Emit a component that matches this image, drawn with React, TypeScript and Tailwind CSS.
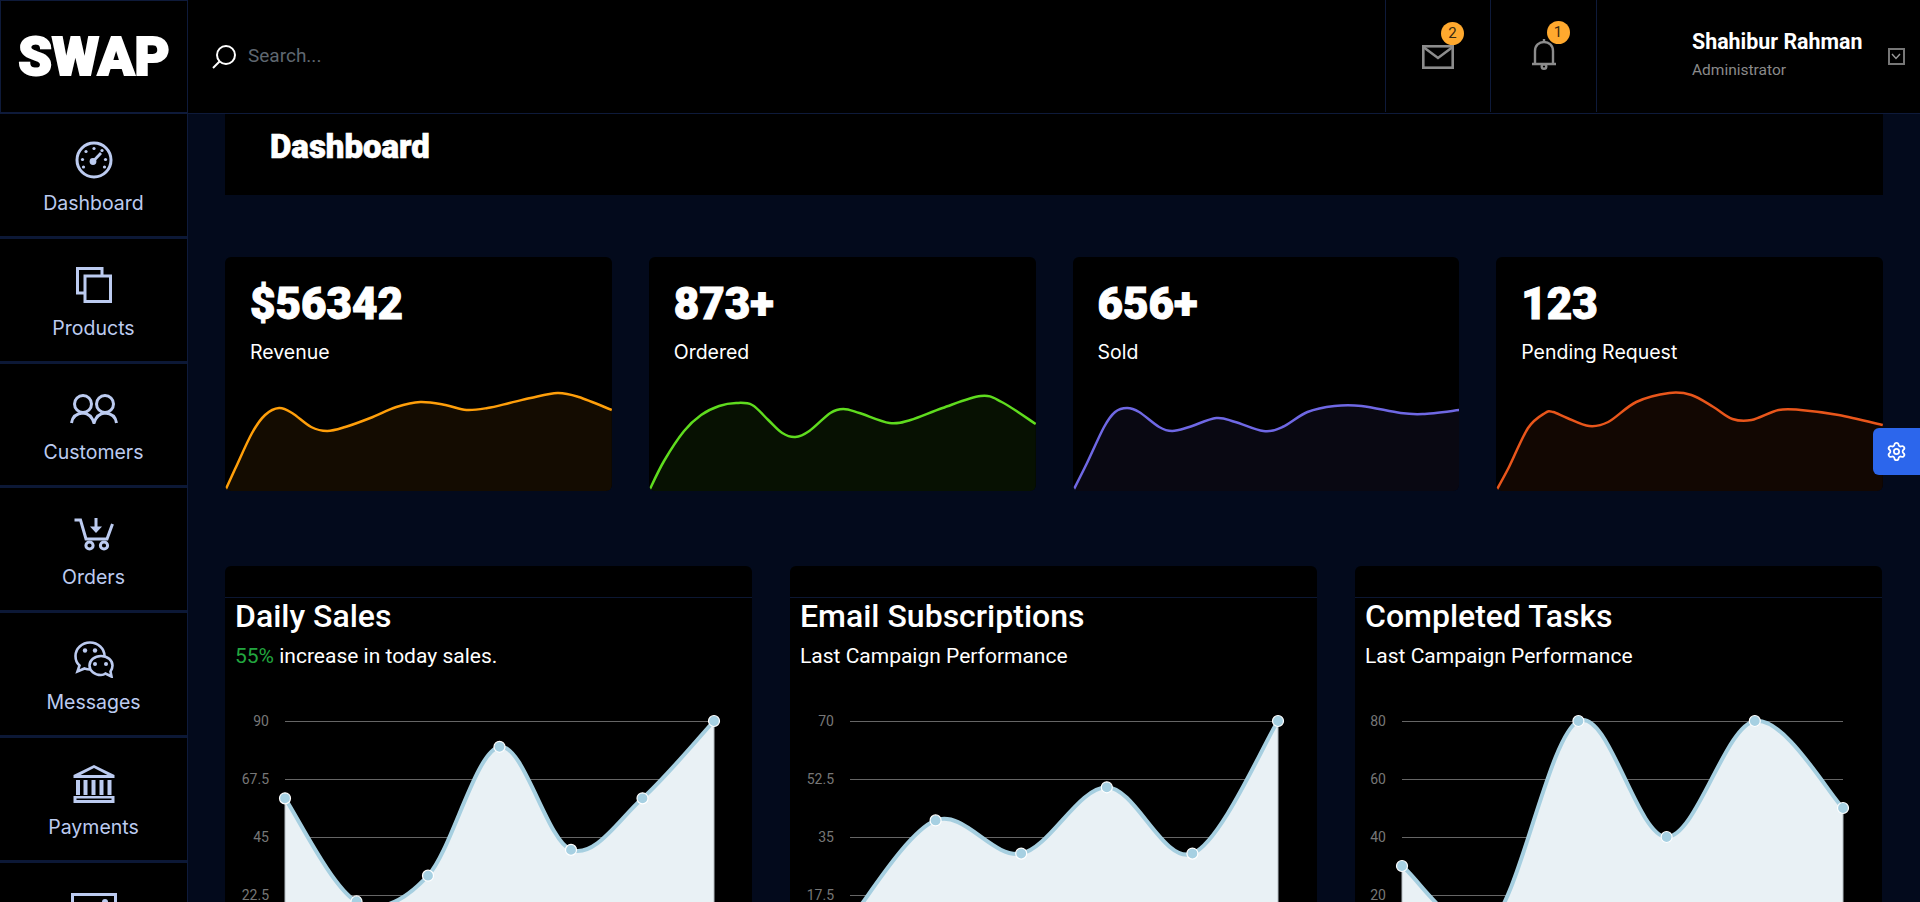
import React from 'react'
import { Settings } from 'lucide-react'

type Pt = [number, number]

// catmull-rom through the points, gives the same soft curves as the chart lib
const smooth = (pts: Pt[]) => {
  let d = `M${pts[0][0]} ${pts[0][1]}`
  for (let i = 0; i < pts.length - 1; i++) {
    const p0 = pts[i - 1] || pts[i]
    const p1 = pts[i]
    const p2 = pts[i + 1]
    const p3 = pts[i + 2] || p2
    const c1x = p1[0] + (p2[0] - p0[0]) / 6
    const c1y = p1[1] + (p2[1] - p0[1]) / 6
    const c2x = p2[0] - (p3[0] - p1[0]) / 6
    const c2y = p2[1] - (p3[1] - p1[1]) / 6
    d += ` C${c1x} ${c1y} ${c2x} ${c2y} ${p2[0]} ${p2[1]}`
  }
  return d
}

const GaugeIcon = () => (
  <svg width="38" height="38" viewBox="0 0 38 38" fill="none" stroke="currentColor">
    <circle cx="19" cy="19" r="17" strokeWidth="3" />
    <path d="M18 20.5 26 12" strokeWidth="2.8" />
    <circle cx="18" cy="20.5" r="3.4" fill="currentColor" stroke="none" />
    {[[19, 7.5], [11, 10.5], [7.5, 18.5], [27, 9.5], [30.5, 18.5], [8.5, 26], [29.5, 26]].map(([x, y]) => (
      <circle key={`${x}-${y}`} cx={x} cy={y} r="1.6" fill="currentColor" stroke="none" />
    ))}
  </svg>
)

const ProductsIcon = () => (
  <svg width="36" height="36" viewBox="0 0 36 36" fill="none" stroke="currentColor" strokeWidth="3">
    <path d="M8 26H1.5V1.5H26V8" />
    <rect x="9" y="9" width="25.5" height="25.5" />
  </svg>
)

const CustomersIcon = () => (
  <svg width="48" height="30" viewBox="0 0 48 30" fill="none" stroke="currentColor" strokeWidth="3">
    <circle cx="13" cy="10" r="8.5" />
    <circle cx="35" cy="10" r="8.5" />
    <path d="M1.5 29Q3 19.5 13 19Q21 19.5 24 29Q27 19.5 35 19Q45 19.5 46.5 29" />
  </svg>
)

const CartIcon = () => (
  <svg width="40" height="33" viewBox="0 0 40 33" fill="none" stroke="currentColor" strokeWidth="3">
    <path d="M0.5 2H6.5L12 21H33L38.5 6" />
    <circle cx="15.5" cy="27.5" r="3.6" />
    <circle cx="30" cy="27.5" r="3.6" />
    <path d="M22 0V11" />
    <path d="M16 8.5H28L22 15Z" fill="currentColor" stroke="none" />
  </svg>
)

const ChatIcon = () => (
  <svg width="40" height="37" viewBox="0 0 40 37" stroke="currentColor" strokeWidth="2.6" fill="none">
    <path d="M3.5 30.5 5.5 24.5C2.5 22 1.5 18.5 1.5 15C1.5 7.5 8 1.5 16 1.5C24 1.5 30.5 7.5 30.5 15C30.5 22.5 24 28.5 16 28.5C14 28.5 12 28 10.5 27.5Z" />
    <path
      d="M37.5 35.5 31.5 32.5C30 33.7 29 34 27 34C20.5 34 15.5 29.7 15.5 24.5C15.5 19.3 20.5 15 27 15C33.5 15 38.5 19.3 38.5 24.5C38.5 27 37.5 29 36.5 30.5Z"
      fill="#000000"
    />
    <g fill="currentColor" stroke="none">
      <circle cx="11" cy="9.5" r="2.2" />
      <circle cx="21" cy="9.5" r="2.2" />
      <circle cx="21" cy="23" r="2" />
      <circle cx="32" cy="23" r="2" />
    </g>
  </svg>
)

const BankIcon = () => (
  <svg width="42" height="38" viewBox="0 0 42 38" fill="currentColor">
    <path d="M21 0 41.5 10V13H0.5V10ZM21 3 7.5 10H34.5Z" fillRule="evenodd" />
    <path d="M3 15H7V30H3ZM10.5 15H14.5V30H10.5ZM18.5 15H22.5V30H18.5ZM26.5 15H30.5V30H26.5ZM34.5 15H38.5V30H34.5Z" />
    <path d="M0.5 31H41.5V38H0.5ZM3.5 33.5V35H38.5V33.5Z" fillRule="evenodd" />
  </svg>
)

const PictureIcon = () => (
  <svg width="46" height="36" viewBox="0 0 46 36" fill="none" stroke="currentColor" strokeWidth="3">
    <rect x="1.5" y="1.5" width="43" height="33" />
    <circle cx="34" cy="9" r="3" fill="currentColor" stroke="none" />
  </svg>
)

const navItems: { label: string; icon: React.ReactNode }[] = [
  { label: 'Dashboard', icon: <GaugeIcon /> },
  { label: 'Products', icon: <ProductsIcon /> },
  { label: 'Customers', icon: <CustomersIcon /> },
  { label: 'Orders', icon: <CartIcon /> },
  { label: 'Messages', icon: <ChatIcon /> },
  { label: 'Payments', icon: <BankIcon /> },
]

const stats: { value: string; label: string; color: string; points: Pt[] }[] = [
  {
    value: '$56342',
    label: 'Revenue',
    color: '#ff9f0a',
    points: [[0, 98], [11, 74], [27, 40], [40, 22], [54, 15], [67, 20], [86, 34], [102, 38], [120, 34], [145, 25], [171, 14], [195, 9], [220, 12], [241, 17], [262, 15], [284, 10], [305, 5], [332, 0], [353, 4], [386, 17]],
  },
  {
    value: '873+',
    label: 'Ordered',
    color: '#5fdc1e',
    points: [[0, 98], [15, 68], [35, 38], [52, 22], [70, 13], [87, 10], [103, 12], [119, 27], [133, 40], [146, 44], [160, 38], [181, 20], [194, 16], [210, 20], [240, 30], [261, 27], [293, 15], [331, 3], [352, 9], [386, 31]],
  },
  {
    value: '656+',
    label: 'Sold',
    color: '#6f68e4',
    points: [[0, 98], [14, 70], [31, 34], [42, 19], [54, 15], [66, 19], [86, 34], [99, 38], [116, 34], [143, 25], [162, 29], [190, 38], [209, 34], [234, 19], [261, 13], [288, 13], [327, 20], [349, 21], [386, 17]],
  },
  {
    value: '123',
    label: 'Pending Request',
    color: '#e9561b',
    points: [[0, 98], [13, 74], [32, 35], [49, 20], [57, 19], [71, 25], [93, 33], [112, 29], [140, 9], [173, 0], [195, 2], [217, 14], [236, 26], [255, 27], [282, 17], [304, 17], [342, 22], [386, 32]],
  },
]

const StatCard: React.FC<(typeof stats)[number]> = ({ value, label, color, points }) => {
  const line = smooth(points.map(([x, y]) => [x, y + 2] as Pt))
  return (
    <div className="flex h-[234px] flex-col overflow-hidden rounded-md bg-black">
      <div className="px-[25px] pt-[23px]">
        <div className="text-[44px] leading-[48px] font-black text-white [-webkit-text-stroke:1px_white]">{value}</div>
        <div className="mt-[10px] font-['Inter',sans-serif] text-[19.5px] leading-[28px] text-white">{label}</div>
      </div>
      <svg className="mt-auto block h-[100px] w-full" viewBox="0 0 386 100" preserveAspectRatio="none">
        <path d={`${line} L386 100 L0 100 Z`} fill={color} fillOpacity="0.08" />
        <path d={line} fill="none" stroke={color} strokeWidth="2.5" />
      </svg>
    </div>
  )
}

const charts = [
  {
    title: 'Daily Sales',
    accent: '55%',
    sub: ' increase in today sales.',
    labels: ['90', '67.5', '45', '22.5', '0'],
    max: 90,
    x0: 60,
    x1: 489,
    values: [60, 20, 30, 80, 40, 60, 90],
  },
  {
    title: 'Email Subscriptions',
    accent: '',
    sub: 'Last Campaign Performance',
    labels: ['70', '52.5', '35', '17.5', '0'],
    max: 70,
    x0: 60,
    x1: 488,
    values: [10, 40, 30, 50, 30, 70],
  },
  {
    title: 'Completed Tasks',
    accent: '',
    sub: 'Last Campaign Performance',
    labels: ['80', '60', '40', '20', '0'],
    max: 80,
    x0: 47,
    x1: 488,
    values: [30, 10, 80, 40, 80, 50],
  },
]

const TOP = 50
const ROW = 58

const ChartCard: React.FC<(typeof charts)[number]> = ({ title, accent, sub, labels, max, x0, x1, values }) => {
  const bottom = TOP + ROW * 4
  const pts = values.map(
    (v, i) => [x0 + ((x1 - x0) * i) / (values.length - 1), TOP + ((max - v) * ROW * 4) / max] as Pt,
  )
  const line = smooth(pts)
  return (
    <div className="h-[400px] rounded-md bg-black">
      <div className="h-[32px] border-b border-[#0c1733]" />
      <div className="px-[10px]">
        <h3 className="text-[32px] leading-[36px] font-medium text-white">{title}</h3>
        <p className="mt-[8px] text-[21px] leading-[28px] text-white">
          {accent && <span className="text-[#22a63f]">{accent}</span>}
          {sub}
        </p>
      </div>
      <svg className="mt-[1px] block" width="527" height="290" viewBox="0 0 527 290">
        {labels.map((l, i) => (
          <React.Fragment key={l}>
            <line x1={x0} x2={x1} y1={TOP + ROW * i + 0.5} y2={TOP + ROW * i + 0.5} stroke="#666666" />
            <text x={x0 - 16} y={TOP + ROW * i + 5} textAnchor="end" fontSize="14" fill="#777777">
              {l}
            </text>
          </React.Fragment>
        ))}
        <path d={`${line} L${x1} ${bottom} L${x0} ${bottom} Z`} fill="#e9f1f5" />
        <line x1={x0} x2={x0} y1={pts[0][1]} y2={bottom} stroke="#b4bcc1" />
        <line x1={x1} x2={x1} y1={pts[pts.length - 1][1]} y2={bottom} stroke="#b4bcc1" />
        <path d={line} fill="none" stroke="#a6cfe0" strokeWidth="4" />
        {pts.map(([x, y]) => (
          <circle key={x} cx={x} cy={y} r="5.5" fill="#a6d0e2" stroke="#ffffff" strokeWidth="1.2" />
        ))}
      </svg>
    </div>
  )
}

export default function App() {
  return (
    <div className="relative h-[902px] overflow-hidden bg-[#030a1c] font-['Roboto',sans-serif]">
      <header className="flex h-[114px] border-b border-[#0e1a3a] bg-black">
        <div className="flex w-[188px] items-center justify-center border border-[#0e1a3a]">
          <span className="text-[54px] leading-none font-black text-white [-webkit-text-stroke:2px_white]">SWAP</span>
        </div>
        <div className="flex flex-1 items-center pl-[23px]">
          <svg width="26" height="26" viewBox="0 0 26 26" fill="none" stroke="white" strokeWidth="2">
            <circle cx="15" cy="11" r="9" />
            <path d="M8.5 17.5 2 24" />
          </svg>
          <span className="ml-[11px] text-[19px] text-[#5f6770]">Search...</span>
        </div>
        <div className="flex h-[112px] w-[105px] items-center justify-center border-l border-[#0e1a3a]">
          <div className="relative mt-[2px]">
            <svg className="block" width="32" height="24" viewBox="0 0 32 24" fill="none" stroke="#8c8c8c" strokeWidth="2.6">
              <rect x="1.3" y="1.3" width="29.4" height="21.4" />
              <path d="M1.3 2 16 13 30.7 2" />
            </svg>
            <span className="absolute top-[-23px] left-[19px] flex h-[23px] w-[23px] items-center justify-center rounded-full bg-[#ffa92e] text-[15px] text-[#3a2a10]">
              2
            </span>
          </div>
        </div>
        <div className="flex h-[112px] w-[106px] items-center justify-center border-l border-[#0e1a3a]">
          <div className="relative mb-[4px]">
            <svg className="block" width="26" height="32" viewBox="0 0 26 32" fill="none" stroke="#8c8c8c" strokeWidth="2.4">
              <path d="M1 26H25M4 26V13C4 7.5 8 4 13 4C18 4 22 7.5 22 13V26" />
              <path d="M13 1V4" />
              <circle cx="13" cy="28.5" r="2.3" />
            </svg>
            <span className="absolute top-[-17px] left-[16px] flex h-[23px] w-[23px] items-center justify-center rounded-full bg-[#ffa92e] text-[15px] text-[#3a2a10]">
              1
            </span>
          </div>
        </div>
        <div className="flex h-[112px] w-[324px] items-center border-l border-[#0e1a3a] pl-[95px]">
          <div className="pb-[3px]">
            <div className="text-[21.4px] leading-[24px] font-bold whitespace-nowrap text-white">Shahibur Rahman</div>
            <div className="mt-[7px] text-[15.5px] leading-[18px] text-[#8a8a8a]">Administrator</div>
          </div>
          <span className="ml-[25px] flex h-[17px] w-[17px] shrink-0 items-center justify-center border-2 border-[#777777]">
            <svg width="10" height="7" viewBox="0 0 10 7" fill="none" stroke="#9a9a9a" strokeWidth="1.4">
              <path d="M1 1 5 5.5 9 1" />
            </svg>
          </span>
        </div>
      </header>

      <div className="flex">
        <aside className="w-[188px] shrink-0 border-r border-[#0e1a3a] bg-black font-['Inter',sans-serif] text-[#bccbf0]">
          {navItems.map((item) => (
            <div
              key={item.label}
              className="flex h-[124.8px] flex-col items-center justify-center gap-[11px] border-b-[3px] border-[#0c1836] pt-[5px]"
            >
              <div className="flex h-[40px] items-center justify-center">{item.icon}</div>
              <span className="text-[19.5px] leading-[24px]">{item.label}</span>
            </div>
          ))}
          <div className="flex justify-center pt-[30px]">
            <PictureIcon />
          </div>
        </aside>

        <main className="flex-1 px-[37px]">
          <div className="flex h-[81px] items-start bg-black pt-[15px] pl-[45px]">
            <h1 className="text-[33px] leading-[36px] font-black text-white [-webkit-text-stroke:0.6px_white]">Dashboard</h1>
          </div>

          <div className="mt-[62px] grid grid-cols-4 gap-[37px]">
            {stats.map((s) => (
              <StatCard key={s.label} {...s} />
            ))}
          </div>

          <div className="mt-[75px] grid w-[1657px] grid-cols-3 gap-[38px]">
            {charts.map((c) => (
              <ChartCard key={c.title} {...c} />
            ))}
          </div>
        </main>
      </div>

      <button className="absolute top-[428px] right-0 flex h-[47px] w-[47px] items-center justify-center rounded-l-md bg-[#2c66ec] text-white">
        <Settings size={21} />
      </button>
    </div>
  )
}
